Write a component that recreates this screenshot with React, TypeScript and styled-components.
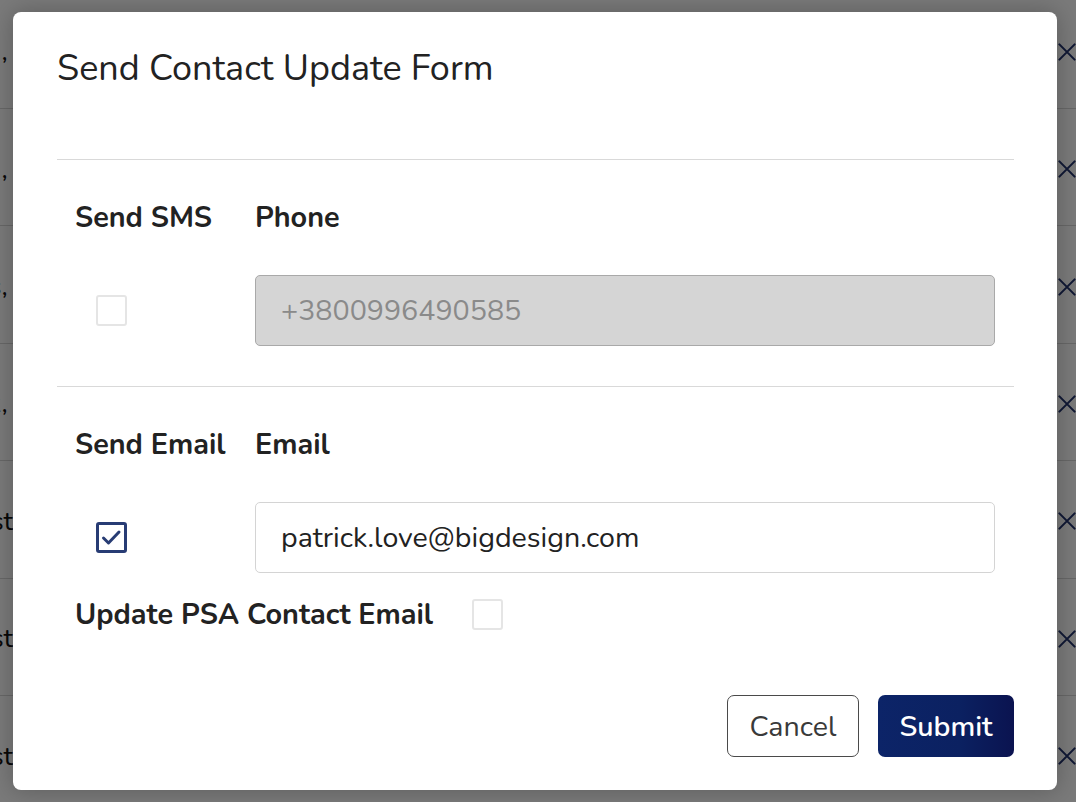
import React from "react";
import styled, { createGlobalStyle } from "styled-components";

const Global = createGlobalStyle`
  html, body { margin: 0; padding: 0; background: #fff; overflow: hidden; }
  body { font-family: "Nunito", "Noto Sans", "Open Sans", sans-serif; }
  * { box-sizing: border-box; }
`;

const Page = styled.div`
  width: 1076px;
  height: 802px;
  overflow: hidden;
  position: relative;
`;

const List = styled.div`
  display: flex;
  flex-direction: column;
  margin-top: -8.4px;
`;

const Row = styled.div`
  height: 117.4px;
  border-bottom: 1px solid #d8d8d8;
  display: flex;
  align-items: center;
  justify-content: space-between;
`;

const Tail = styled.div`
  width: 13px;
  overflow: hidden;
  display: flex;
  justify-content: flex-end;
  white-space: pre;
  font-size: 27px;
  color: #111;
  margin-top: 4px;
`;

const XCell = styled.div`
  width: 18px;
  height: 26px;
  overflow: hidden;
  display: flex;
  margin-top: 4px;
`;

const Overlay = styled.div`
  position: absolute;
  inset: 0;
  background: rgba(0, 0, 0, 0.52);
`;

const Modal = styled.div`
  position: absolute;
  left: 13px;
  top: 12px;
  width: 1044px;
  height: 778px;
  background: #fff;
  border-radius: 8px;
  box-shadow: 0 0 24px rgba(0, 0, 0, 0.25);
  padding: 0 43px 0 44px;
  display: flex;
  flex-direction: column;
  color: #222;
`;

const Title = styled.h2`
  margin: 36px 0 0;
  font-size: 36px;
  line-height: 42px;
  font-weight: 400;
  color: #222;
  height: 111px;
  white-space: nowrap;
`;

const Divider = styled.hr`
  margin: 0;
  border: none;
  border-top: 1px solid #d9d9d9;
`;

const Section = styled.div`
  display: grid;
  grid-template-columns: 180px 1fr;
  padding: 43px 19px 0 18px;
  row-gap: 42px;
  align-items: center;
`;

const Label = styled.div`
  font-size: 28.8px;
  line-height: 30px;
  font-weight: 700;
  color: #222;
  white-space: nowrap;
`;

const Box = styled.span<{ $checked?: boolean }>`
  display: inline-flex;
  align-items: center;
  justify-content: center;
  width: 31px;
  height: 31px;
  border-radius: 3px;
  border: ${(p) => (p.$checked ? "3px solid #283c74" : "2px solid #e5e5e5")};
  background: #fff;
  margin-left: 21px;
`;

const Input = styled.input<{ $disabled?: boolean }>`
  height: 71px;
  width: 100%;
  border-radius: 5px;
  border: 1px solid ${(p) => (p.$disabled ? "#a9a9a9" : "#d4d4d4")};
  background: ${(p) => (p.$disabled ? "#d5d5d5" : "#fff")};
  color: ${(p) => (p.$disabled ? "#8a8a8a" : "#222")};
  font-family: inherit;
  font-size: 28.6px;
  padding: 0 25px;
  outline: none;
`;

const SectionEnd = styled.div`
  height: 40px;
`;

const PsaRow = styled.div`
  display: flex;
  align-items: center;
  gap: 39px;
  padding: 26px 0 0 18px;
  & ${Box} { margin-left: 0; }
`;

const Footer = styled.div`
  margin-top: auto;
  margin-bottom: 33px;
  display: flex;
  justify-content: flex-end;
  gap: 19px;
`;

const Button = styled.button<{ $primary?: boolean }>`
  height: 62px;
  padding: 0 20px;
  min-width: ${(p) => (p.$primary ? "136px" : "132px")};
  border-radius: 7px;
  font-family: inherit;
  font-size: 28.6px;
  font-weight: ${(p) => (p.$primary ? 600 : 400)};
  border: ${(p) => (p.$primary ? "none" : "1px solid #4a4a4a")};
  color: ${(p) => (p.$primary ? "#fff" : "#3a3a3a")};
  background: ${(p) =>
    p.$primary ? "linear-gradient(90deg, #0c2468 0%, #0b2161 60%, #0b1350 100%)" : "#fff"};
`;

const XIcon = () => (
  <svg width="26" height="26" viewBox="0 0 26 26">
    <path d="M2 2 L24 24 M24 2 L2 24" stroke="#22336e" strokeWidth="3" strokeLinecap="round" fill="none" />
  </svg>
);

const Check = () => (
  <svg width="25" height="25" viewBox="0 0 25 25">
    <path d="M4.5 13 L9.5 18 L20 7" stroke="#283c74" strokeWidth="3" fill="none" strokeLinecap="round" strokeLinejoin="round" />
  </svg>
);

const tails = ["Smith,\u2009", "Brown,\u2009", "Jones,\u2009", "Clark,\u2009", "Test", "Test", "Test"];

export default function App() {
  return (
    <Page>
      <Global />
      <List>
        {tails.map((t, i) => (
          <Row key={i}>
            <Tail>{t}</Tail>
            <XCell>
              <XIcon />
            </XCell>
          </Row>
        ))}
      </List>
      <Overlay />
      <Modal>
        <Title>Send Contact Update Form</Title>
        <Divider />
        <Section>
          <Label>Send SMS</Label>
          <Label>Phone</Label>
          <Box />
          <Input $disabled disabled value="+3800996490585" readOnly />
        </Section>
        <SectionEnd />
        <Divider />
        <Section>
          <Label>Send Email</Label>
          <Label>Email</Label>
          <Box $checked>
            <Check />
          </Box>
          <Input value="patrick.love@bigdesign.com" readOnly />
        </Section>
        <PsaRow>
          <Label>Update PSA Contact Email</Label>
          <Box />
        </PsaRow>
        <Footer>
          <Button>Cancel</Button>
          <Button $primary>Submit</Button>
        </Footer>
      </Modal>
    </Page>
  );
}
